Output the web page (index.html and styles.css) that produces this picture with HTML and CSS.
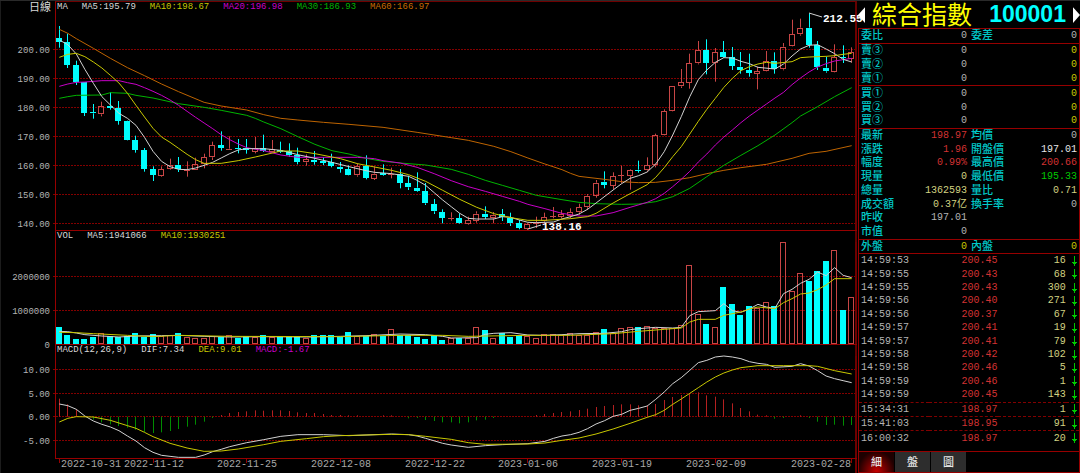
FILE: index.html
```html
<!DOCTYPE html>
<html lang="zh-Hant">
<head>
    <meta charset="UTF-8">
    <meta name="viewport" content="width=device-width, initial-scale=1.0">
    <title>綜合指數 100001</title>
    <link rel="stylesheet" href="styles.css">
</head>
<body>
    <svg class="defs" width="0" height="0">
        <symbol id="arrow" viewBox="0 0 5 10"><path d="M2 0h1v6h2v1h-1v1h-1v2h-1v-2h-1v-1h-1v-1h2z"/></symbol>
    </svg>

    <div class="app">
        <main class="charts">
            <div class="legend legend-top">
                <span class="period">日線</span>
                <div class="legend-items">
                    <span class="white">MA</span>
                    <span class="white">MA5:195.79</span>
                    <span class="yellow">MA10:198.67</span>
                    <span class="magenta">MA20:196.98</span>
                    <span class="green">MA30:186.93</span>
                    <span class="orange">MA60:166.97</span>
                </div>
            </div>
            <svg class="chart" id="priceChart" viewBox="0 12 857 219"></svg>

            <div class="legend">
                <span class="period"></span>
                <div class="legend-items">
                    <span class="white">VOL</span>
                    <span class="white">MA5:1941066</span>
                    <span class="yellow">MA10:1930251</span>
                </div>
            </div>
            <svg class="chart" id="volumeChart" viewBox="0 17 857 103"></svg>

            <div class="legend">
                <span class="period"></span>
                <div class="legend-items">
                    <span class="white">MACD(12,26,9)</span>
                    <span class="white">DIF:7.34</span>
                    <span class="yellow">DEA:9.01</span>
                    <span class="magenta">MACD:-1.67</span>
                </div>
            </div>
            <svg class="chart" id="macdChart" viewBox="0 131 857 117"></svg>
        </main>

        <aside class="side">
            <header class="title-bar">
                <button class="nav" aria-label="上一個"><svg viewBox="0 0 8 18"><path d="M8 0V18L0 9Z"/></svg></button>
                <h1>綜合指數</h1>
                <span class="code">100001</span>
                <button class="nav" aria-label="下一個"><svg viewBox="0 0 8 18"><path d="M0 0V18L8 9Z"/></svg></button>
            </header>

            <div class="quote">
                <table class="pairs">
                    <tr><th>委比</th><td>0</td><th>委差</th><td>0</td></tr>
                </table>
                <table class="pairs">
                    <tr><th>賣③</th><td>0</td><th></th><td class="yellow">0</td></tr>
                    <tr><th>賣②</th><td>0</td><th></th><td class="yellow">0</td></tr>
                    <tr><th>賣①</th><td>0</td><th></th><td class="yellow">0</td></tr>
                </table>
                <table class="pairs">
                    <tr><th>買①</th><td>0</td><th></th><td class="yellow">0</td></tr>
                    <tr><th>買②</th><td>0</td><th></th><td class="yellow">0</td></tr>
                    <tr><th>買③</th><td>0</td><th></th><td class="yellow">0</td></tr>
                </table>
                <table class="pairs info">
                    <tr><th>最新</th><td class="up">198.97</td><th>均價</th><td>0</td></tr>
                    <tr><th>漲跌</th><td class="up">1.96</td><th>開盤價</th><td class="bright">197.01</td></tr>
                    <tr><th>幅度</th><td class="up">0.99%</td><th>最高價</th><td class="up">200.66</td></tr>
                    <tr><th>現量</th><td class="pale">0</td><th>最低價</th><td class="down">195.33</td></tr>
                    <tr><th>總量</th><td class="pale">1362593</td><th>量比</th><td class="pale">0.71</td></tr>
                    <tr><th>成交額</th><td class="pale">0.37亿</td><th>換手率</th><td>0</td></tr>
                    <tr><th>昨收</th><td>197.01</td><th></th><td></td></tr>
                    <tr><th>市值</th><td>0</td><th></th><td></td></tr>
                </table>
                <table class="pairs">
                    <tr><th>外盤</th><td class="yellow">0</td><th>內盤</th><td class="yellow">0</td></tr>
                </table>
                <div class="tick-box">
                    <table class="ticks">
                        <tr><td>14:59:53</td><td>200.45</td><td>16</td><td><svg class="arrow"><use href="#arrow"/></svg></td></tr>
                        <tr><td>14:59:55</td><td>200.43</td><td>68</td><td><svg class="arrow"><use href="#arrow"/></svg></td></tr>
                        <tr><td>14:59:55</td><td>200.43</td><td>300</td><td><svg class="arrow"><use href="#arrow"/></svg></td></tr>
                        <tr><td>14:59:56</td><td>200.40</td><td>271</td><td><svg class="arrow"><use href="#arrow"/></svg></td></tr>
                        <tr><td>14:59:56</td><td>200.37</td><td>67</td><td><svg class="arrow"><use href="#arrow"/></svg></td></tr>
                        <tr><td>14:59:57</td><td>200.41</td><td>19</td><td><svg class="arrow"><use href="#arrow"/></svg></td></tr>
                        <tr><td>14:59:57</td><td>200.41</td><td>79</td><td><svg class="arrow"><use href="#arrow"/></svg></td></tr>
                        <tr><td>14:59:58</td><td>200.42</td><td>102</td><td><svg class="arrow"><use href="#arrow"/></svg></td></tr>
                        <tr><td>14:59:58</td><td>200.46</td><td>5</td><td><svg class="arrow"><use href="#arrow"/></svg></td></tr>
                        <tr><td>14:59:59</td><td>200.46</td><td>1</td><td><svg class="arrow"><use href="#arrow"/></svg></td></tr>
                        <tr><td>14:59:59</td><td>200.45</td><td>143</td><td><svg class="arrow"><use href="#arrow"/></svg></td></tr>
                        <tr class="split"><td>15:34:31</td><td>198.97</td><td>1</td><td><svg class="arrow"><use href="#arrow"/></svg></td></tr>
                        <tr class="split"><td>15:41:03</td><td>198.95</td><td>91</td><td><svg class="arrow"><use href="#arrow"/></svg></td></tr>
                        <tr class="split"><td>16:00:32</td><td>198.97</td><td>20</td><td><svg class="arrow"><use href="#arrow"/></svg></td></tr>
                    </table>
                </div>
                <nav class="tabs">
                    <button class="tab active">細</button>
                    <button class="tab">盤</button>
                    <button class="tab">圖</button>
                </nav>
            </div>
        </aside>
    </div>

    <script src="chart.js"></script>
</body>
</html>
```

FILE: styles.css
```css
* {
    box-sizing: border-box;
}

body {
    margin: 0;
    background: #000;
    color: #b4b4b4;
    font-family: "Liberation Mono", "Noto Sans CJK TC", monospace;
    font-size: 10px;
}

button {
    padding: 0;
    border: none;
    background: none;
    font-family: inherit;
    cursor: pointer;
}

.defs {
    display: none;
}

.app {
    display: grid;
    grid-template-columns: 857fr 223fr;
    border-top: 1px solid #2a2a2a;
    border-bottom: 1px solid #6e0000;
}

/* Colors */
.white { color: #d8d8d8; }
.yellow { color: #c8c800; }
.magenta { color: #c800c8; }
.green { color: #00b400; }
.orange { color: #c86c00; }
.pairs .yellow { color: #c8c800; }
.up { color: #d23232; }
.down { color: #00c800; }
.pale { color: #d2d282; }
.bright { color: #e6e6e6; }

/* Charts */
.charts {
    display: flex;
    flex-direction: column;
    min-width: 0;
    box-shadow: inset 1px 0 #1c1c1c;
}

.legend {
    display: flex;
    height: 11px;
    font-size: 9px;
    line-height: 10px;
    white-space: nowrap;
}

.period {
    width: 55px;
    padding-right: 4px;
    flex: none;
    text-align: right;
    font-size: 11px;
    line-height: 14px;
    color: #d8d8d8;
}

.legend-items {
    display: flex;
    flex: 1;
    gap: 14px;
    padding-left: 1px;
    border-left: 1px solid #960000;
    border-right: 2px solid #640000;
}

.legend-top .legend-items {
    border-top: 1px solid #6e0000;
}

.chart {
    display: block;
    width: 100%;
    overflow: visible;
}

.axis-line { fill: #960000; }
.frame-line { fill: #6e0000; }
.grid-line { stroke: #820000; stroke-dasharray: 2 1; }
.axis-text { fill: #b4b4b4; font-size: 9px; text-anchor: end; }
.date-text { fill: #a8a8a8; font-size: 10px; }
.mark-text { fill: #fff; font-size: 11px; font-weight: bold; }
.candle-down { fill: #00ffff; }
.candle-up { fill: none; stroke: #c84646; }
.wick-up { fill: #c84646; }
.hist-up { fill: #b42020; }
.hist-down { fill: #008c00; }
.line { fill: none; stroke-width: 1; }
.line-white { stroke: #d2d2d2; }
.line-yellow { stroke: #c8c800; }
.line-magenta { stroke: #c800c8; }
.line-green { stroke: #00b400; }
.line-orange { stroke: #be6400; }

/* Side panel */
.side {
    display: flex;
    flex-direction: column;
    min-width: 0;
    padding-left: 1px;
}

.title-bar {
    display: flex;
    align-items: center;
    justify-content: space-between;
    height: 27px;
}

.title-bar h1 {
    margin: 0;
    font-family: "Liberation Sans", "Noto Sans CJK TC", sans-serif;
    font-size: 25px;
    font-weight: 400;
    line-height: 24px;
    color: #ffff00;
}

.code {
    padding-left: 10px;
    font-family: "Liberation Sans", sans-serif;
    font-size: 23px;
    font-weight: bold;
    line-height: 27px;
    color: #00ffff;
}

.nav {
    width: 7px;
    height: 18px;
}

.nav svg {
    display: block;
    width: 7px;
    height: 18px;
    fill: #fff;
}

.quote {
    display: flex;
    flex-direction: column;
    flex: 1;
    border: 1px solid #960000;
    border-bottom: none;
}

table {
    width: 100%;
    border-collapse: collapse;
    table-layout: fixed;
}

th,
td {
    padding: 0;
    line-height: 13px;
    white-space: nowrap;
}

.pairs {
    border-bottom: 1px solid #960000;
}

.pairs tr {
    height: 14px;
}

.info tr {
    height: 13px;
}

.info {
    height: 111px;
}

.pairs th {
    padding-left: 2px;
    text-align: left;
    font-family: "Liberation Sans", "Noto Sans CJK TC", sans-serif;
    font-size: 11px;
    font-weight: 500;
    color: #00c8c8;
}

.pairs td {
    padding-right: 2px;
    text-align: right;
}

.tick-box {
    flex: 1;
}

.ticks {
    height: 191px;
}

.ticks td {
    text-align: right;
}

.ticks td:nth-child(1) {
    width: 32%;
    padding-left: 2px;
    text-align: left;
}

.ticks td:nth-child(2) {
    width: 31%;
    color: #d23232;
}

.ticks td:nth-child(3) {
    width: 31%;
    color: #d2d282;
}

.ticks td:nth-child(4) {
    padding-right: 2px;
}

.arrow {
    display: block;
    width: 5px;
    height: 10px;
    margin-left: auto;
    fill: #00c800;
}

.ticks .split {
    border-top: 1px dashed #820000;
}

/* Tabs */
.tabs {
    display: flex;
    gap: 1px;
    border-top: 1px solid #960000;
    border-bottom: 1px solid #960000;
}

.tab {
    width: 35px;
    height: 20px;
    background: #2d2d2d;
    font-family: "Liberation Sans", "Noto Sans CJK TC", sans-serif;
    font-size: 11px;
    font-weight: 500;
    line-height: 18px;
    color: #e6e6e6;
}

.tab.active {
    background: radial-gradient(ellipse at 50% 100%, #c80000, #1e0000 75%);
}
```

FILE: chart.js
```js
const NS = 'http://www.w3.org/2000/svg';

// y values below are stored in thirds of a chart unit
const UNIT = 3;
const COUNT = 94;

const colX = i => 59.3 + i * 8.52;
const valY = v => v / UNIT;

// [high, body top, body bottom, low], 1 = rising day
const candles = [
    [0,78,114,126,143],[0,101,126,194,204],[0,182,195,246,255],[0,246,247,338,348],[0,312,337,340,356],
    [1,305,318,343,349],[0,277,318,324,329],[0,303,325,363,374],[0,362,364,419,421],[0,407,420,450,458],
    [0,444,451,507,515],[0,499,507,524,543],[1,499,508,527,530],[1,476,494,508,510],[0,471,494,508,516],
    [1,484,509,512,530],[1,473,492,509,510],[1,461,472,493,505],[1,425,436,472,480],[0,394,435,444,452],
    [1,409,446,449,450],[0,417,444,448,460],[0,417,444,449,461],[1,411,444,455,460],[0,404,444,452,456],
    [1,420,448,456,457],[0,425,450,455,459],[0,430,454,466,470],[0,443,464,486,493],[1,463,477,487,497],
    [0,453,479,486,494],[0,472,484,488,495],[0,461,486,498,502],[0,486,500,507,518],[0,496,507,524,526],
    [1,490,499,526,530],[0,466,497,534,538],[1,499,521,536,540],[0,493,519,524,527],[1,503,522,525,535],
    [0,507,523,548,565],[0,527,549,562,570],[0,517,563,573,575],[0,549,574,610,615],[0,597,613,634,642],
    [0,628,636,654,670],[1,637,653,656,662],[0,640,655,670,672],[1,650,661,673,675],[1,634,641,662,668],
    [0,619,641,650,657],[1,636,644,655,670],[0,627,642,650,663],[0,638,653,670,678],[0,660,670,683,688],
    [1,670,673,686,690],[1,650,669,672,684],[1,638,652,664,670],[1,621,648,651,655],[1,630,643,651,655],
    [1,625,636,647,655],[1,611,622,637,644],[1,582,587,622,630],[1,540,548,587,593],[0,514,545,555,565],
    [1,517,528,557,568],[1,497,525,528,550],[1,508,511,527,569],[0,482,509,513,518],[1,472,496,511,516],
    [1,401,406,496,502],[1,328,334,406,407],[1,258,259,334,335],[1,207,247,259,264],[1,161,190,248,266],
    [1,123,151,190,193],[0,118,151,188,223],[1,144,157,188,245],[0,123,157,171,173],[0,141,172,198,210],
    [0,156,200,210,221],[0,161,210,219,230],[1,200,214,222,268],[1,153,184,214,215],[0,157,182,206,221],
    [1,129,140,208,211],[1,59,103,139,140],[1,56,83,103,107],[0,40,83,135,143],[0,123,136,202,210],
    [0,170,203,214,218],[1,133,172,217,218],[0,136,171,174,189],[1,142,157,176,188]
];

const volumes = [
    305,329,341,341,335,325,334,335,334,323,335,326,333,329,323,336,340,338,334,337,329,338,334,336,331,
    337,334,335,335,340,331,331,331,335,321,333,334,327,332,313,330,330,336,341,329,345,338,340,338,307,
    316,338,323,336,331,333,339,326,328,330,325,329,330,322,313,325,310,307,307,304,308,310,310,299,121,
    268,298,307,185,237,270,244,250,232,242,50,199,145,167,137,108,76,254,217
];

const macd = [
    521,538,552,573,584,592,598,603,608,614,621,624,622,618,612,605,599,590,579,570,564,561,559,556,557,
    556,556,558,562,564,564,567,570,570,571,571,575,575,571,571,575,580,579,585,588,592,592,595,592,586,
    584,579,575,575,575,575,570,567,564,561,559,555,551,546,543,540,538,538,541,541,537,525,516,510,505,
    502,511,515,523,535,549,559,569,571,581,579,575,571,579,590,600,599,602,600
];

// Lines are [day, y] pairs
const priceLines = {
    orange: [[0,88],[1,100],[2,116],[4,145],[6,175],[8,203],[10,227],[12,252],[14,275],[17,307],[19,318],[22,330],[24,344],[26,355],[28,360],[31,367],[34,373],[38,382],[42,397],[46,413],[48,421],[51,439],[53,455],[55,474],[57,492],[59,509],[60,520],[61,529],[64,538],[66,545],[68,548],[70,547],[72,541],[74,533],[76,521],[78,511],[80,503],[83,493],[86,475],[88,460],[90,454],[93,437]],
    green: [[0,295],[1,290],[2,286],[5,285],[6,278],[8,280],[9,286],[11,294],[14,311],[17,322],[19,331],[22,346],[23,355],[24,366],[26,386],[28,410],[30,433],[32,452],[34,462],[36,475],[38,484],[40,489],[43,495],[46,508],[48,523],[50,541],[52,556],[54,571],[56,586],[59,599],[61,607],[63,611],[66,613],[68,612],[70,605],[72,590],[74,565],[76,530],[78,496],[80,466],[82,437],[84,405],[86,368],[87,348],[89,320],[91,290],[93,263]],
    magenta: [[0,259],[1,252],[2,247],[3,246],[5,242],[7,242],[8,248],[9,253],[10,263],[11,274],[12,286],[13,300],[14,316],[15,334],[16,352],[17,369],[18,386],[19,404],[20,419],[21,432],[22,443],[24,452],[26,465],[28,472],[31,472],[35,472],[37,476],[38,482],[40,489],[42,502],[44,521],[46,542],[48,560],[50,574],[52,589],[54,604],[55,613],[57,626],[59,640],[61,648],[63,648],[65,638],[67,622],[69,607],[70,596],[71,580],[72,560],[73,538],[74,514],[75,486],[76,462],[77,435],[78,411],[79,390],[80,368],[81,348],[82,330],[83,312],[84,294],[85,277],[86,254],[87,234],[88,216],[89,201],[90,191],[91,183],[92,179],[93,175]],
    white: [[0,120],[1,134],[2,162],[3,208],[4,250],[5,290],[6,315],[7,340],[8,355],[9,376],[10,412],[11,454],[12,484],[13,500],[14,508],[15,509],[16,504],[17,496],[18,487],[19,474],[20,461],[21,450],[22,446],[24,446],[26,451],[28,464],[30,475],[32,487],[34,500],[36,512],[37,517],[39,521],[41,529],[42,541],[43,556],[44,578],[45,600],[46,620],[47,640],[48,655],[49,657],[51,657],[52,650],[53,652],[54,660],[55,667],[56,668],[58,666],[59,657],[60,650],[61,642],[62,628],[63,609],[65,570],[66,551],[67,535],[68,527],[69,516],[70,492],[71,455],[72,405],[73,350],[74,290],[75,239],[76,210],[77,187],[78,173],[79,174],[80,184],[81,191],[82,202],[84,207],[85,192],[86,168],[87,147],[88,136],[89,134],[90,147],[91,161],[92,178],[93,186]],
    yellow: [[0,172],[1,163],[2,160],[3,170],[4,186],[5,204],[6,226],[7,249],[8,280],[9,316],[10,351],[11,385],[12,411],[13,427],[14,445],[15,463],[16,479],[17,490],[19,490],[21,482],[23,471],[25,459],[26,453],[28,453],[30,461],[32,471],[33,476],[35,491],[37,501],[39,511],[41,524],[43,544],[45,571],[47,598],[49,622],[51,641],[53,653],[55,661],[57,661],[60,656],[62,650],[63,640],[65,609],[67,581],[69,554],[70,532],[71,503],[72,470],[73,440],[74,402],[75,364],[76,328],[77,295],[78,262],[79,235],[80,212],[81,200],[82,192],[83,187],[84,190],[86,185],[87,173],[88,171],[90,169],[91,167],[92,163],[93,160]]
};

const volumeLines = {
    white: [[0,319],[1,320],[2,324],[3,329],[5,333],[7,336],[9,333],[12,332],[14,331],[17,334],[20,336],[24,335],[29,336],[33,334],[36,332],[40,327],[43,329],[45,334],[46,339],[49,338],[50,328],[51,325],[53,323],[55,330],[57,331],[59,329],[61,326],[64,325],[66,320],[67,314],[68,311],[70,307],[72,309],[73,307],[74,272],[75,260],[77,257],[78,236],[79,257],[80,262],[81,252],[82,238],[83,246],[84,250],[85,206],[86,193],[87,175],[88,163],[89,141],[90,152],[91,128],[92,151],[93,158]],
    yellow: [[0,322],[2,323],[4,326],[8,331],[11,335],[14,331],[20,334],[33,335],[40,331],[45,331],[48,334],[55,331],[60,331],[65,326],[68,319],[71,313],[73,309],[74,291],[75,283],[77,283],[78,271],[80,261],[81,252],[82,246],[84,251],[85,233],[86,221],[87,207],[88,204],[89,194],[90,180],[91,161],[93,161]]
};

const macdLines = {
    white: [[0,537],[1,542],[2,553],[3,573],[4,588],[5,598],[6,606],[7,617],[8,633],[9,648],[10,668],[11,682],[12,691],[13,694],[14,697],[16,697],[17,690],[18,680],[19,673],[20,665],[22,653],[24,644],[26,634],[28,629],[31,629],[34,632],[36,630],[39,627],[41,629],[42,633],[43,640],[45,655],[46,660],[48,667],[50,662],[52,659],[55,656],[57,649],[58,640],[59,633],[60,629],[61,622],[62,611],[63,597],[64,587],[65,574],[66,568],[67,556],[68,550],[69,543],[70,523],[71,501],[72,476],[73,458],[74,436],[75,413],[76,406],[77,396],[78,393],[79,396],[80,401],[81,410],[82,415],[83,418],[84,427],[86,424],[87,416],[88,423],[89,437],[90,453],[91,461],[92,467],[93,473]],
    yellow: [[0,591],[1,580],[2,575],[4,576],[6,586],[8,602],[9,610],[10,622],[11,635],[13,655],[15,669],[17,679],[19,678],[21,672],[24,659],[26,649],[29,641],[31,635],[33,632],[36,630],[39,628],[41,629],[43,634],[46,643],[48,653],[50,658],[55,657],[57,654],[59,646],[61,639],[63,627],[65,612],[67,595],[69,577],[70,569],[71,556],[72,538],[73,522],[74,505],[75,488],[76,471],[77,456],[78,444],[79,435],[80,428],[82,422],[85,422],[88,422],[89,424],[91,437],[93,447]]
};

function add(svg, tag, cls, attrs, text) {
    const el = document.createElementNS(NS, tag);
    el.setAttribute('class', cls);
    for (const key in attrs) {
        el.setAttribute(key, attrs[key]);
    }
    if (text) {
        el.textContent = text;
    }
    svg.appendChild(el);
}

// Frame on the left, right and bottom of a panel
function drawFrame(svg, top, bottom) {
    add(svg, 'rect', 'axis-line', { x: 55, y: top, width: 1, height: bottom - top });
    add(svg, 'rect', 'frame-line', { x: 855, y: top, width: 2, height: bottom - top });
    add(svg, 'rect', 'axis-line', { x: 55, y: bottom - 1, width: 802, height: 1 });
}

function drawGrid(svg, rows) {
    rows.forEach(([y, label]) => {
        if (y !== 119) {
            add(svg, 'line', 'grid-line', { x1: 53, x2: 855, y1: y + 0.5, y2: y + 0.5 });
        }
        add(svg, 'text', 'axis-text', { x: 50, y: y + 4 }, label);
    });
}

function drawLines(svg, lines) {
    for (const color in lines) {
        const points = lines[color].map(([i, v]) => colX(i) + ',' + valY(v)).join(' ');
        add(svg, 'polyline', 'line line-' + color, { points: points });
    }
}

function drawBody(svg, up, i, top, bottom) {
    const x = Math.floor(colX(i));
    const y = Math.round(top);
    const h = Math.max(1, Math.round(bottom) - y);
    if (up && h > 1) {
        add(svg, 'rect', 'candle-up', { x: x - 2.5, y: y + 0.5, width: 5, height: h - 1 });
    } else {
        add(svg, 'rect', up ? 'wick-up' : 'candle-down', { x: x - 3, y: y, width: 6, height: h });
    }
}

function drawPrice() {
    const svg = document.getElementById('priceChart');
    drawGrid(svg, [[49, '200.00'], [78, '190.00'], [107, '180.00'], [136, '170.00'], [165, '160.00'], [194, '150.00'], [223, '140.00']]);
    drawFrame(svg, 12, 231);
    candles.forEach(([up, high, top, bottom, low], i) => {
        const x = Math.floor(colX(i));
        const cls = up ? 'wick-up' : 'candle-down';
        add(svg, 'rect', cls, { x: x, y: valY(high), width: 1, height: valY(top - high) });
        add(svg, 'rect', cls, { x: x, y: valY(bottom), width: 1, height: valY(low - bottom) });
        drawBody(svg, up, i, valY(top), valY(bottom));
    });
    drawLines(svg, priceLines);

    // Highest and lowest marks
    add(svg, 'line', 'line line-white', { x1: 809, y1: 13, x2: 822, y2: 17 });
    add(svg, 'text', 'mark-text', { x: 823, y: 22 }, '212.55');
    add(svg, 'line', 'line line-white', { x1: 528, y1: 229, x2: 541, y2: 225 });
    add(svg, 'text', 'mark-text', { x: 542, y: 230 }, '138.16');
}

function drawVolume() {
    const svg = document.getElementById('volumeChart');
    drawGrid(svg, [[51, '2000000'], [85, '1000000'], [119, '0']]);
    drawFrame(svg, 17, 120);
    volumes.forEach((v, i) => drawBody(svg, candles[i][0], i, valY(v), 118.6));
    drawLines(svg, volumeLines);
}

function drawMacd() {
    const svg = document.getElementById('macdChart');
    const zero = 575;
    drawGrid(svg, [[144, '10.00'], [168, '5.00'], [191, '0.00'], [215, '-5.00']]);
    drawFrame(svg, 131, 234);
    macd.forEach((v, i) => {
        const x = Math.floor(colX(i));
        const cls = v < zero ? 'hist-up' : 'hist-down';
        add(svg, 'rect', cls, { x: x, y: valY(Math.min(v, zero)), width: 1, height: valY(Math.abs(v - zero)) });
    });
    drawLines(svg, macdLines);

    const dates = [[61, '2022-10-31'], [124, '2022-11-12'], [217, '2022-11-25'], [311, '2022-12-08'], [405, '2022-12-22'], [498, '2023-01-06'], [592, '2023-01-19'], [686, '2023-02-09'], [791, '2023-02-28']];
    dates.forEach(([x, label], n) => {
        const index = n === dates.length - 1 ? COUNT - 1 : n * 11;
        add(svg, 'rect', 'axis-line', { x: Math.floor(colX(index)), y: 234, width: 1, height: 4 });
        add(svg, 'text', 'date-text', { x: x, y: 242 }, label);
    });
    add(svg, 'rect', 'frame-line', { x: 855, y: 234, width: 2, height: 14 });
}

drawPrice();
drawVolume();
drawMacd();
```
